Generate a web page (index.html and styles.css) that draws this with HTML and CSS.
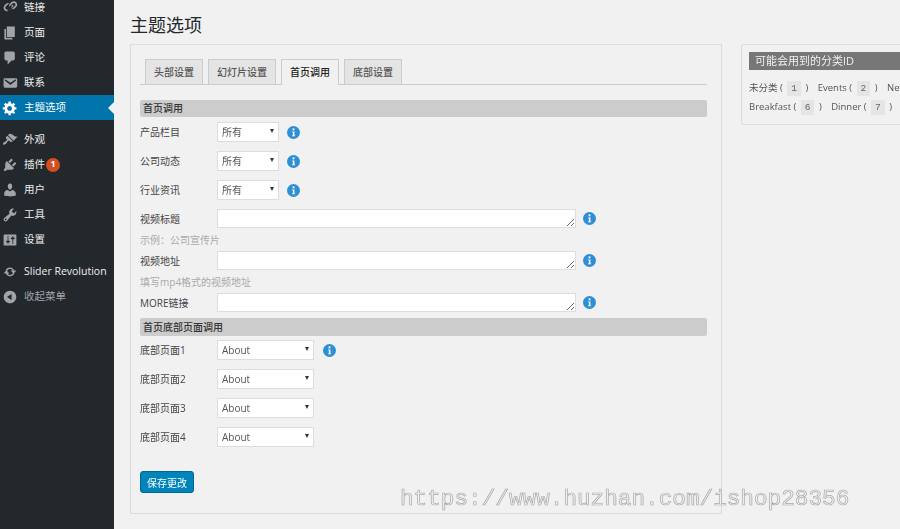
FILE: index.html
```html
<!DOCTYPE html>
<html lang="zh">
<head>
<meta charset="utf-8">
<title>主题选项</title>
<link rel="stylesheet" href="styles.css">
</head>
<body>
<div class="page">
  <aside class="sidebar">
    <ul class="menu">
      <li class="item"><svg class="ico" viewBox="0 0 20 20"><path d="M17.74 2.76c1.68 1.69 1.68 4.41 0 6.1l-1.53 1.52c-1.12 1.12-2.7 1.47-4.14 1.09l2.62-2.61.76-.77.76-.76c.84-.84.84-2.2 0-3.04-.84-.85-2.2-.85-3.04 0l-.77.76-3.38 3.38c-.37-1.44-.02-3.02 1.1-4.14l1.52-1.53c1.69-1.68 4.42-1.68 6.1 0zM8.59 13.43l5.34-5.34c.42-.42.42-1.1 0-1.52-.44-.43-1.13-.39-1.53 0l-5.33 5.34c-.42.42-.42 1.1 0 1.52.44.43 1.13.39 1.52 0zm-.76-2.29l4.14-4.15c.38 1.44.03 3.02-1.09 4.14l-1.52 1.53c-1.69 1.68-4.41 1.68-6.1 0-1.68-1.68-1.68-4.42 0-6.1l1.53-1.52c1.12-1.12 2.7-1.47 4.14-1.1l-4.14 4.15c-.85.84-.85 2.2 0 3.05.84.84 2.2.84 3.04 0z"/></svg><span>链接</span></li>
      <li class="item"><svg class="ico" viewBox="0 0 20 20"><path d="M6 15V2h10v13H6zm-1 1h8v2H3V5h2v11z"/></svg><span>页面</span></li>
      <li class="item"><svg class="ico" viewBox="0 0 20 20"><path d="M5 2h9q.82 0 1.41.59T16 4v7q0 .82-.59 1.41T14 13h-2l-5 5v-5H5q-.82 0-1.41-.59T3 11V4q0-.82.59-1.41T5 2z"/></svg><span>评论</span></li>
      <li class="item"><svg class="ico" viewBox="0 0 20 20"><path d="M3.87 4h13.25C18.37 4 19 4.59 19 5.79v8.42c0 1.19-.63 1.79-1.88 1.79H3.87c-1.25 0-1.88-.6-1.88-1.79V5.79c0-1.2.63-1.79 1.88-1.79zm6.62 8.6l6.74-5.53c.24-.2.43-.66.13-1.07-.29-.41-.82-.42-1.17-.17l-5.7 3.86L4.8 5.83c-.35-.25-.88-.24-1.17.17-.3.41-.11.87.13 1.07z"/></svg><span>联系</span></li>
      <li class="item active"><svg class="ico" viewBox="0 0 20 20"><path d="M18 12h-2.18c-.17.7-.44 1.35-.81 1.93l1.54 1.54-2.1 2.1-1.54-1.54c-.58.36-1.23.63-1.91.79V19H8v-2.18c-.68-.16-1.33-.43-1.91-.79l-1.54 1.54-2.12-2.12 1.54-1.54c-.36-.58-.63-1.23-.79-1.91H1V9.03h2.17c.16-.7.44-1.35.8-1.94L2.43 5.55l2.1-2.1 1.54 1.54c.58-.37 1.24-.64 1.93-.81V2h3v2.18c.68.16 1.33.43 1.91.79l1.54-1.54 2.12 2.12-1.54 1.54c.36.59.64 1.24.8 1.94H18V12zm-8.5 1.5c1.66 0 3-1.34 3-3s-1.34-3-3-3-3 1.34-3 3 1.34 3 3 3z"/></svg><span>主题选项</span></li>
      <li class="item sep"><svg class="ico" viewBox="0 0 20 20"><path d="M14.48 11.06L7.41 3.99l1.5-1.5c.5-.56 2.3-.47 3.51.32 1.21.8 1.43 1.28 2.91 2.1 1.18.64 2.45 1.26 4.45.85zm-.71.71L6.7 4.7 4.93 6.47c-.39.39-.39 1.02 0 1.41l1.06 1.06c.39.39.39 1.03 0 1.42-.6.6-1.43 1.11-2.21 1.69-.35.26-.7.53-1.01.84C1.43 13.23.76 14.75 1.53 15.53c.78.77 2.3.1 3.64-1.23.31-.31.58-.66.84-1.01.58-.78 1.09-1.61 1.69-2.21.39-.39 1.02-.39 1.41 0l1.06 1.06c.39.39 1.02.39 1.41 0z"/></svg><span>外观</span></li>
      <li class="item"><svg class="ico" viewBox="0 0 20 20"><path d="M13.11 4.36L9.87 7.6 8 5.73l3.24-3.24c.35-.34 1.05-.2 1.56.32.52.51.66 1.21.31 1.55zm-8 1.77l.91-1.12 9.01 9.01-1.19.84c-.71.71-2.63 1.16-3.82 1.16H6.14L4.9 17.26c-.59.59-1.54.59-2.12 0-.59-.58-.59-1.53 0-2.12l1.24-1.24v-3.88c0-1.13.4-3.19 1.09-3.89zm7.26 3.97l3.24-3.24c.34-.35 1.04-.21 1.55.31.52.51.66 1.21.31 1.55l-3.24 3.25z"/></svg><span>插件</span><b class="badge">1</b></li>
      <li class="item"><svg class="ico" viewBox="0 0 20 20"><path d="M10 9.25c-2.27 0-2.73-3.44-2.73-3.44C7 4.02 7.82 2 9.97 2c2.16 0 2.98 2.02 2.71 3.81 0 0-.41 3.44-2.68 3.44zm0 2.57L12.72 10c2.39 0 4.52 2.33 4.52 4.53v2.49s-3.65 1.13-7.24 1.13c-3.65 0-7.24-1.13-7.24-1.13v-2.49c0-2.25 1.94-4.48 4.47-4.48z"/></svg><span>用户</span></li>
      <li class="item"><svg class="ico" viewBox="0 0 20 20"><path d="M16.68 9.77c-1.34 1.34-3.3 1.67-4.95.99l-5.41 6.52c-.99.99-2.59.99-3.58 0s-.99-2.59 0-3.57l6.52-5.42c-.68-1.65-.35-3.61.99-4.95 1.28-1.28 3.12-1.62 4.72-1.06l-2.89 2.89 2.82 2.82 2.86-2.87c.53 1.58.18 3.39-1.08 4.65zM3.81 16.21c.4.39 1.04.39 1.43 0 .4-.4.4-1.04 0-1.43-.39-.4-1.03-.4-1.43 0-.39.39-.39 1.03 0 1.43z"/></svg><span>工具</span></li>
      <li class="item"><svg class="ico" viewBox="0 0 20 20"><path d="M18 16V4c0-.55-.45-1-1-1H3c-.55 0-1 .45-1 1v12c0 .55.45 1 1 1h14c.55 0 1-.45 1-1zM8 11h1c.55 0 1 .45 1 1s-.45 1-1 1H8v1.5c0 .28-.22.5-.5.5s-.5-.22-.5-.5V13H6c-.55 0-1-.45-1-1s.45-1 1-1h1V5.5c0-.28.22-.5.5-.5s.5.22.5.5V11zm5-2h-1c-.55 0-1-.45-1-1s.45-1 1-1h1V5.5c0-.28.22-.5.5-.5s.5.22.5.5V7h1c.55 0 1 .45 1 1s-.45 1-1 1h-1v5.5c0 .28-.22.5-.5.5s-.5-.22-.5-.5V9z"/></svg><span>设置</span></li>
      <li class="item sep"><svg class="ico" viewBox="0 0 20 20"><path d="M10 4.5c2.3 0 4.3 1.4 5.1 3.5H18l-3.6 4.2L10.800 8h2.500C12.600 6.900 11.400 6.300 10 6.300c-1.500 0-2.800.8-3.500 2H4.500C5.300 6.100 7.500 4.500 10 4.500zM2 12l3.600-4.200L9.200 12H6.700c.7 1.100 1.900 1.700 3.300 1.700 1.500 0 2.800-.8 3.500-2h2c-.8 2.200-3 3.800-5.500 3.800-2.300 0-4.300-1.400-5.100-3.500H2z"/></svg><span>Slider Revolution</span></li>
      <li class="item collapse"><svg class="ico" viewBox="0 0 20 20"><path d="M10 2.160c4.330 0 7.840 3.510 7.840 7.840s-3.510 7.840-7.840 7.840S2.160 14.330 2.160 10 5.710 2.160 10 2.160zm2 11.720V6.120L6.180 9.970z"/></svg><span>收起菜单</span></li>
    </ul>
  </aside>
  <main class="content">
    <h1 class="title">主题选项</h1>
    <div class="columns">
      <form class="panel">
        <div class="tabs">
          <span class="tab">头部设置</span>
          <span class="tab">幻灯片设置</span>
          <span class="tab current">首页调用</span>
          <span class="tab">底部设置</span>
        </div>
        <h2 class="section first">首页调用</h2>
        <div class="row">
          <label class="label">产品栏目</label>
          <div class="select narrow"><select><option>所有</option></select></div>
          <svg class="info" viewBox="0 0 14 14"><circle cx="7" cy="7" r="7"/><rect class="dot" x="6" y="2.600" width="2" height="2"/><path class="dot" d="M5.500 5.800H8v4.300h.800v1H5.400v-1h.900V6.800h-.800z"/></svg>
        </div>
        <div class="row">
          <label class="label">公司动态</label>
          <div class="select narrow"><select><option>所有</option></select></div>
          <svg class="info" viewBox="0 0 14 14"><circle cx="7" cy="7" r="7"/><rect class="dot" x="6" y="2.600" width="2" height="2"/><path class="dot" d="M5.500 5.800H8v4.300h.800v1H5.400v-1h.900V6.800h-.800z"/></svg>
        </div>
        <div class="row">
          <label class="label">行业资讯</label>
          <div class="select narrow"><select><option>所有</option></select></div>
          <svg class="info" viewBox="0 0 14 14"><circle cx="7" cy="7" r="7"/><rect class="dot" x="6" y="2.600" width="2" height="2"/><path class="dot" d="M5.500 5.800H8v4.300h.800v1H5.400v-1h.900V6.800h-.800z"/></svg>
        </div>
        <div class="row area">
          <label class="label">视频标题</label>
          <textarea class="text"></textarea>
          <svg class="info" viewBox="0 0 14 14"><circle cx="7" cy="7" r="7"/><rect class="dot" x="6" y="2.600" width="2" height="2"/><path class="dot" d="M5.500 5.800H8v4.300h.800v1H5.400v-1h.900V6.800h-.800z"/></svg>
        </div>
        <p class="hint">示例：公司宣传片</p>
        <div class="row area">
          <label class="label">视频地址</label>
          <textarea class="text"></textarea>
          <svg class="info" viewBox="0 0 14 14"><circle cx="7" cy="7" r="7"/><rect class="dot" x="6" y="2.600" width="2" height="2"/><path class="dot" d="M5.500 5.800H8v4.300h.800v1H5.400v-1h.900V6.800h-.800z"/></svg>
        </div>
        <p class="hint">填写mp4格式的视频地址</p>
        <div class="row area">
          <label class="label">MORE链接</label>
          <textarea class="text"></textarea>
          <svg class="info" viewBox="0 0 14 14"><circle cx="7" cy="7" r="7"/><rect class="dot" x="6" y="2.600" width="2" height="2"/><path class="dot" d="M5.500 5.800H8v4.300h.800v1H5.400v-1h.900V6.800h-.800z"/></svg>
        </div>
        <h2 class="section second">首页底部页面调用</h2>
        <div class="row">
          <label class="label">底部页面1</label>
          <div class="select wide"><select><option>About</option></select></div>
          <svg class="info" viewBox="0 0 14 14"><circle cx="7" cy="7" r="7"/><rect class="dot" x="6" y="2.600" width="2" height="2"/><path class="dot" d="M5.500 5.800H8v4.300h.800v1H5.400v-1h.900V6.800h-.800z"/></svg>
        </div>
        <div class="row">
          <label class="label">底部页面2</label>
          <div class="select wide"><select><option>About</option></select></div>
        </div>
        <div class="row">
          <label class="label">底部页面3</label>
          <div class="select wide"><select><option>About</option></select></div>
        </div>
        <div class="row">
          <label class="label">底部页面4</label>
          <div class="select wide"><select><option>About</option></select></div>
        </div>
        <button class="save" type="button">保存更改</button>
      </form>
      <aside class="ids">
        <h3 class="ids-title">可能会用到的分类ID</h3>
        <p class="ids-line">未分类 ( <code>1</code> ) <span class="pair">Events ( <code>2</code> )</span> <span class="pair">News ( <code>3</code> )</span></p>
        <p class="ids-line">Breakfast ( <code>6</code> ) <span class="pair">Dinner ( <code>7</code> )</span> <span class="pair">Lunch ( <code>8</code> )</span></p>
      </aside>
    </div>
  </main>
  <div class="watermark">https://www.huzhan.com/ishop28356</div>
</div>
</body>
</html>
```

FILE: styles.css
```css
* { box-sizing: border-box; }
html, body { margin: 0; height: 100%; }
body {
  background: #f1f1f1;
  color: #444;
  font: 10px/1.4 "Open Sans", "Noto Sans CJK SC", sans-serif;
  overflow: hidden;
}
.page { display: flex; width: 900px; height: 529px; overflow: hidden; position: relative; }

.sidebar { flex: 0 0 114px; background: #23282d; overflow: hidden; }
.menu { list-style: none; margin: -5px 0 0; padding: 0; }
.item {
  display: flex; align-items: center; position: relative;
  height: 25px; padding-left: 2px;
  color: #eee; font-size: 10.5px; white-space: nowrap;
}
.ico { flex: 0 0 16px; width: 16px; height: 16px; margin-right: 6px; fill: #a0a5aa; }
.item.sep { margin-top: 7px; }
.item.active { background: #0073aa; color: #fff; }
.item.active .ico { fill: #fff; }
.item.active::after {
  content: ""; position: absolute; right: 0; top: 7px;
  border: 6px solid transparent; border-left-width: 0; border-right-color: #f1f1f1;
}
.item.collapse { color: #a0a5aa; }
.badge {
  display: flex; align-items: center; justify-content: center;
  width: 14px; height: 14px; margin-left: 1px; border-radius: 50%;
  background: #d54e21; color: #fff; font-size: 9px; font-weight: 700;
}

.content { flex: 1 1 auto; min-width: 0; padding-left: 16px; }
.title { margin: 0; height: 44px; padding-top: 12px; font-size: 18px; font-weight: 400; line-height: 26px; color: #23282d; }
.columns { display: flex; align-items: flex-start; gap: 19px; }

.panel {
  flex: 0 0 592px; height: 470px;
  padding: 14px 14px 0 9px;
  border: 1px solid #dcdcdc; background: #f1f1f1;
}
.tabs { display: flex; gap: 5px; height: 26px; padding-left: 5px; border-bottom: 1px solid #ccc; }
.tab {
  height: 25px; padding: 0 8px;
  border: 1px solid #ccc; border-bottom: 0; background: #e4e4e4;
  color: #555; font-size: 10px; font-weight: 500; line-height: 25px;
}
.tab.current { height: 26px; background: #f1f1f1; color: #222; }

.section {
  margin: 0; height: 18px; padding-left: 3px;
  background: #ccc; border-radius: 2px;
  color: #333; font-size: 10px; font-weight: 500; line-height: 18px;
}
.section.first { margin: 15px 0 5px; height: 17px; line-height: 17px; }
.section.second { margin: 6px 0 4px; }

.row { display: flex; align-items: center; height: 20px; margin-bottom: 9px; }
.row.area { margin-bottom: 0; height: 19px; }
.label { flex: 0 0 77px; color: #444; font-size: 10px; line-height: 20px; }
.select { position: relative; height: 20px; }
.select select {
  display: block; width: 100%; height: 100%; padding: 0 5px 0 4px;
  appearance: none; -webkit-appearance: none;
  border: 1px solid #ddd; border-radius: 0; background: #fff;
  color: #555; font: 10px "Open Sans", "Noto Sans CJK SC", sans-serif;
}
.select::after {
  content: ""; position: absolute; right: 5px; top: 7px;
  border-style: solid; border-width: 4px 2.500px 0; border-color: #333 transparent transparent;
}
.narrow { flex: 0 0 62px; margin-right: 8px; }
.wide { flex: 0 0 97px; margin-right: 9px; }
.info { flex: 0 0 13px; width: 13px; height: 13px; fill: #2e8fd5; }
.info .dot { fill: #fff; }
.text {
  flex: 0 0 359px; width: 359px; height: 19px; margin: 0 7px 0 0; padding: 2px 4px;
  border: 1px solid #ddd; background: #fff; display: block;
}
.hint { margin: 0; height: 23px; padding-top: 4px; color: #aaa; font-size: 10px; line-height: 16px; }

.save {
  display: block; width: 54px; height: 22px; margin-top: 24px; padding: 0;
  border: 1px solid #006799; border-radius: 3px;
  background: #0085ba; color: #fff;
  font: 10px "Open Sans", "Noto Sans CJK SC", sans-serif;
}

.ids {
  flex: 0 0 auto; width: 300px; height: 81px;
  padding: 7px 0 0 7px;
  border: 1px solid #dcdcdc; border-radius: 2px; background: #f1f1f1;
}
.ids-title {
  margin: 0 0 9px; height: 18px; padding-left: 6px;
  background: #777; color: #f1f1f1; font-size: 11px; font-weight: 400; line-height: 18px;
}
.ids-line { margin: 0; height: 18.500px; color: #555; font-size: 9.500px; line-height: 18px; white-space: nowrap; }
.pair { margin-left: 7px; }
code {
  display: inline-block; padding: 0 4px; background: #e5e5e5; color: #666;
  font: 9.500px/15px "Liberation Mono", monospace; margin: 0 2px;
}

.watermark {
  position: absolute; left: 400px; top: 484px;
  font: 22.700px/30px "Liberation Mono", monospace;
  color: transparent; -webkit-text-stroke: .7px #a8a8a8;
  white-space: nowrap; pointer-events: none;
}
```
